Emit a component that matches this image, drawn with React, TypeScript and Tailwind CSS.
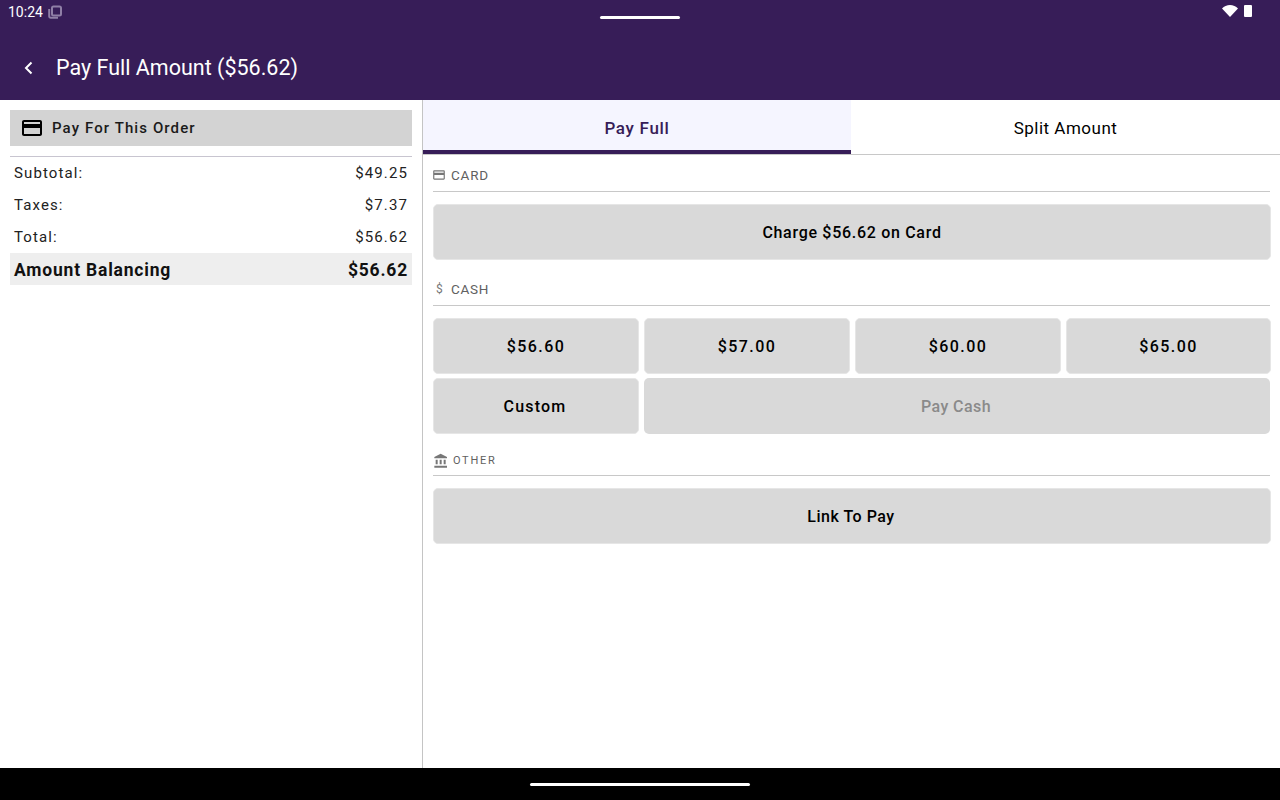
const CardIcon = ({ className }: { className: string }) => (
  <svg viewBox="0 0 24 24" fill="currentColor" className={className}>
    <path d="M20 4H4c-1.11 0-1.99.89-1.99 2L2 18c0 1.11.89 2 2 2h16c1.11 0 2-.89 2-2V6c0-1.11-.89-2-2-2zm0 14H4v-6h16v6zm0-10H4V6h16v2z" />
  </svg>
);

const BankIcon = ({ className }: { className: string }) => (
  <svg viewBox="0 0 24 24" fill="currentColor" className={className}>
    <path d="M4 10v7h3v-7H4zm6 0v7h3v-7h-3zM2 22h19v-3H2v3zm14-12v7h3v-7h-3zm-4.500-9L2 6v2h19V6l-9.500-5z" />
  </svg>
);

const PayButton = ({ label, className = '' }: { label: string; className?: string }) => (
  <button className={`h-14 pt-[2px] rounded-[5px] bg-[#d9d9d9] border border-[#e6e6e6] text-base font-medium text-black ${className}`}>
    {label}
  </button>
);

const SummaryRow = ({ label, value }: { label: string; value: string }) => (
  <div className="h-8 px-1 flex items-center justify-between text-[15px] tracking-[1.1px] text-[#222]">
    <span>{label}</span>
    <span>{value}</span>
  </div>
);

export default function App() {
  return (
    <div className="w-[1280px] h-[800px] flex flex-col overflow-hidden bg-white font-['Roboto',sans-serif]">
      <header className="h-[100px] shrink-0 bg-[#371d58] text-white">
        <div className="h-[34px] px-2 grid grid-cols-3">
          <div className="flex items-start pt-[3px] gap-[5px] text-sm leading-[18px]">
            <span>10:24</span>
            <svg viewBox="0 0 14 14" className="w-[14px] h-[14px] mt-[2px] text-[#8f7fa6]" fill="none" stroke="currentColor" strokeWidth="2">
              <rect x="4" y="1.500" width="9" height="9" rx="1.500" />
              <path d="M1.200 4v7.300A1.500 1.500 0 0 0 2.700 12.800H10" />
            </svg>
          </div>
          <div className="flex justify-center pt-4">
            <div className="w-20 h-[3px] rounded-full bg-white" />
          </div>
          <div className="flex justify-end items-start gap-[6px] pt-[5px] pr-5">
            <svg viewBox="0 0 16 12" className="w-4 h-3" fill="white">
              <path d="M0 3.500C2 1.300 4.900 0 8 0s6 1.300 8 3.500L8 12z" />
            </svg>
            <div className="w-2 h-3 rounded-[1px] bg-white" />
          </div>
        </div>
        <div className="h-[66px] pt-[2px] flex items-center pl-[22px]">
          <svg viewBox="0 0 12 14" className="w-3 h-[14px]" fill="none" stroke="white" strokeWidth="2">
            <path d="M9.500 1.500 4 7l5.500 5.500" />
          </svg>
          <h1 className="ml-[22px] text-[21.5px] leading-7">Pay Full Amount ($56.62)</h1>
        </div>
      </header>

      <main className="flex-1 flex min-h-0">
        <aside className="w-[423px] shrink-0 border-r border-[#c4c4c4] p-2.5">
          <div className="h-9 px-2.5 flex items-center gap-2 bg-[#d3d3d3] text-black">
            <CardIcon className="w-6 h-6" />
            <span className="text-[15px] font-medium tracking-[1.1px] text-[#1a1a1a]">Pay For This Order</span>
          </div>
          <div className="mt-2.5 border-t border-[#c8c5d0]">
            <SummaryRow label="Subtotal:" value="$49.25" />
            <SummaryRow label="Taxes:" value="$7.37" />
            <SummaryRow label="Total:" value="$56.62" />
            <div className="h-8 px-1 pt-[2px] flex items-center justify-between bg-[#eeeeee] text-[17.500px] font-bold tracking-[0.8px] text-[#111]">
              <span>Amount Balancing</span>
              <span>$56.62</span>
            </div>
          </div>
        </aside>

        <section className="flex-1 min-w-0">
          <div className="h-[55px] flex border-b border-[#c8c8c8]">
            <div className="w-[428px] h-[54px] pt-2 flex items-center justify-center bg-[#f5f5ff] border-b-4 border-[#371d58] text-[17px] font-medium tracking-[0.7px] text-[#371d58]">
              Pay Full
            </div>
            <div className="flex-1 pt-1 flex items-center justify-center text-[17px] tracking-[0.5px] text-black">
              Split Amount
            </div>
          </div>

          <div className="pl-2.5 pr-[9px]">
            <div className="h-[37px] mr-px pt-1 flex items-center gap-[5px] border-b border-[#c8c8c8] text-[#616161]">
              <CardIcon className="w-[14px] h-[14px] ml-[-1px] text-[#777]" />
              <span className="text-[13.500px] tracking-[0.8px]">CARD</span>
            </div>
            <div className="pt-3 flex">
              <PayButton label="Charge $56.62 on Card" className="w-full tracking-[0.7px]" />
            </div>

            <div className="mt-[11px] h-[35px] mr-px pt-[2px] flex items-center gap-[9px] border-b border-[#c8c8c8] text-[#616161]">
              <span className="w-[9px] pl-[3px] text-xs text-[#777]">$</span>
              <span className="text-[13.500px] tracking-[0.7px]">CASH</span>
            </div>
            <div className="pt-3 grid grid-cols-[206px_206px_206px_205px] gap-x-[5px] gap-y-1">
              <PayButton label="$56.60" className="tracking-[1.4px]" />
              <PayButton label="$57.00" className="tracking-[1.4px]" />
              <PayButton label="$60.00" className="tracking-[1.4px]" />
              <PayButton label="$65.00" className="tracking-[1.4px]" />
              <PayButton label="Custom" className="pr-[2px] tracking-[1.2px]" />
              <button className="col-span-3 h-14 mr-px pt-[2px] pr-[2px] rounded-[5px] bg-[#d9d9d9] text-base font-medium tracking-[0.4px] text-[#8a8a8a]">Pay Cash</button>
            </div>

            <div className="mt-[11px] h-[31px] mr-px pt-[2px] flex items-center gap-1 border-b border-[#c8c8c8] text-[#616161]">
              <BankIcon className="w-4 h-4 text-[#777]" />
              <span className="text-[11px] tracking-[1.7px]">OTHER</span>
            </div>
            <div className="pt-3 flex">
              <PayButton label="Link To Pay" className="w-full pr-[2px] tracking-[0.5px]" />
            </div>
          </div>
        </section>
      </main>

      <footer className="h-8 shrink-0 bg-black flex justify-center pt-[15px]">
        <div className="w-[220px] h-[3px] rounded-full bg-white" />
      </footer>
    </div>
  );
}
